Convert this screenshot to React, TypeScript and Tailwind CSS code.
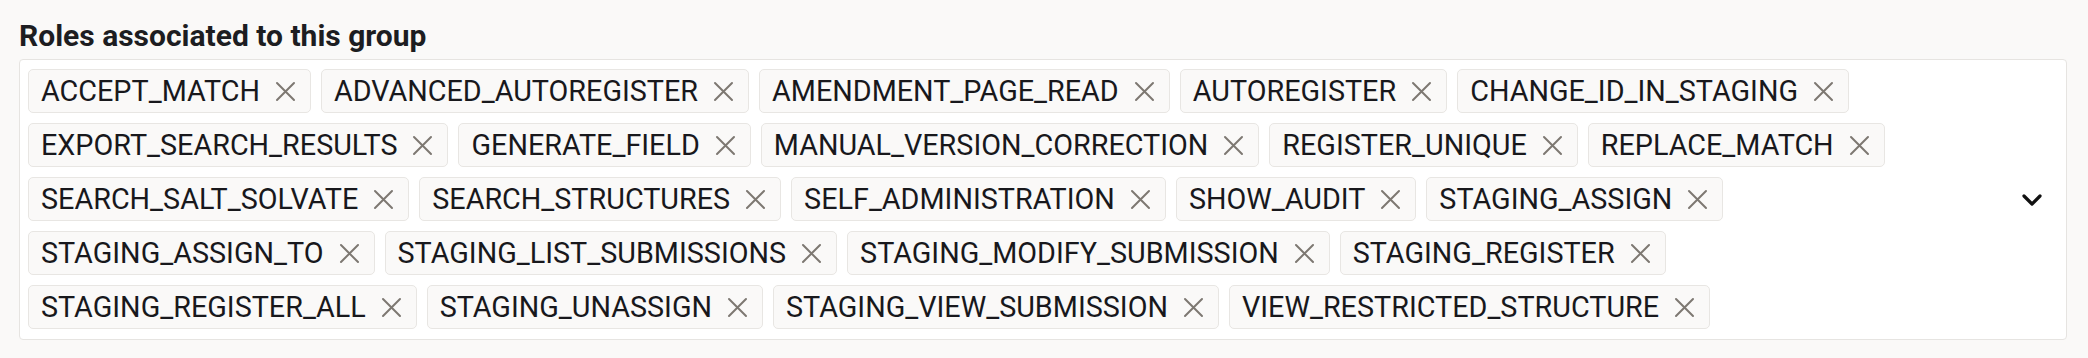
const roles = [
  "ACCEPT_MATCH",
  "ADVANCED_AUTOREGISTER",
  "AMENDMENT_PAGE_READ",
  "AUTOREGISTER",
  "CHANGE_ID_IN_STAGING",
  "EXPORT_SEARCH_RESULTS",
  "GENERATE_FIELD",
  "MANUAL_VERSION_CORRECTION",
  "REGISTER_UNIQUE",
  "REPLACE_MATCH",
  "SEARCH_SALT_SOLVATE",
  "SEARCH_STRUCTURES",
  "SELF_ADMINISTRATION",
  "SHOW_AUDIT",
  "STAGING_ASSIGN",
  "STAGING_ASSIGN_TO",
  "STAGING_LIST_SUBMISSIONS",
  "STAGING_MODIFY_SUBMISSION",
  "STAGING_REGISTER",
  "STAGING_REGISTER_ALL",
  "STAGING_UNASSIGN",
  "STAGING_VIEW_SUBMISSION",
  "VIEW_RESTRICTED_STRUCTURE",
]

function RoleTag({ name }: { name: string }) {
  return (
    <span className="flex h-[44px] items-center gap-[15px] rounded-[5px] border border-[#e8e6e3] bg-[#faf9f8] pl-[12px] pr-[14px] text-[28.75px] leading-[34px] text-[#18181c]">
      {name}
      <svg width="21" height="21" viewBox="0 0 21 21" fill="none" stroke="#7d7872" strokeWidth="2" strokeLinecap="round">
        <path d="M2 2 L19 19 M19 2 L2 19" />
      </svg>
    </span>
  )
}

export default function App() {
  return (
    <div className="h-[358px] w-[2088px] bg-[#faf9f8] pl-[19px] pt-[18px]" style={{ fontFamily: "Roboto, 'Liberation Sans', sans-serif" }}>
      <div className="mb-[5px] text-[30px] font-bold leading-[36px] text-[#1d1d21]">Roles associated to this group</div>
      <div className="flex w-[2048px] rounded-[4px] border border-[#e6e4e1] bg-white">
        <div className="flex flex-1 flex-wrap gap-[10px] pt-[9px] pb-[10px] pl-[8px]">
          {roles.map((r) => (
            <RoleTag key={r} name={r} />
          ))}
        </div>
        <div className="flex items-center pl-4 pr-[23px]">
          <svg width="22" height="14" viewBox="0 0 22 14" fill="none" stroke="#111" strokeWidth="3.2" strokeLinecap="round" strokeLinejoin="round">
            <path d="M3 3 L11 11 L19 3" />
          </svg>
        </div>
      </div>
    </div>
  )
}
